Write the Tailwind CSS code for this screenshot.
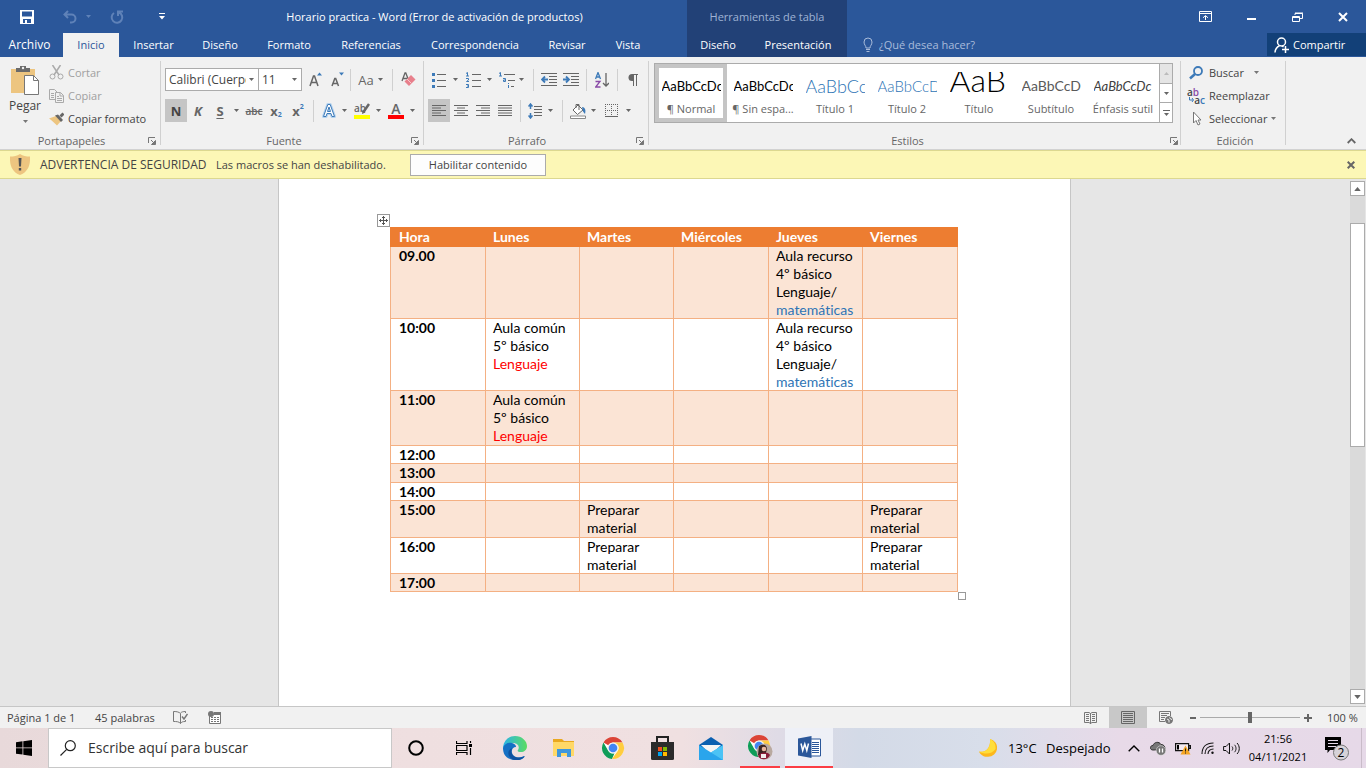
<!DOCTYPE html>
<html lang="es">
<head>
<meta charset="utf-8">
<meta name="viewport" content="width=device-width, initial-scale=1">
<title>Horario practica - Word</title>
<script src="https://cdn.jsdelivr.net/npm/@tailwindcss/browser@4"></script>
</head>
<body class="flex h-screen flex-col overflow-hidden bg-[#e6e6e6] font-['Open_Sans','Noto_Sans',sans-serif] text-[11px] leading-4 text-[#444]">
<svg class="hidden">
  <symbol id="caret" viewBox="0 0 5 3"><path d="M0 0h5L2.500 3z" fill="currentColor"/></symbol>
  <symbol id="launch" viewBox="0 0 8 8"><path d="M.5 6V.5H7M3 3l3 3M7.500 3.500v4h-4z" fill="none" stroke="#777"/><path d="M7.500 3.500v4h-4z" fill="#777"/></symbol>
  <symbol id="chrome" viewBox="0 0 24 24"><circle cx="12" cy="12" r="11" fill="#fff"/><path d="M12 1a11 11 0 0 1 9.530 5.500H12a5.500 5.500 0 0 0-4.760 2.750L2.470 6.500A11 11 0 0 1 12 1z" fill="#db4437"/><path d="M2.470 6.500 7.240 14.750A5.500 5.500 0 0 0 12 17.500l1.500-.2L11 23A11 11 0 0 1 2.470 6.500z" fill="#0f9d58"/><path d="M21.530 6.500A11 11 0 0 1 11 23l5.760-8.250A5.500 5.500 0 0 0 16 8.200L12 6.500z" fill="#ffcd40"/><circle cx="12" cy="12" r="5.500" fill="#f1f1f1"/><circle cx="12" cy="12" r="4.300" fill="#4285f4"/></symbol>
</svg>

<header class="flex h-[57px] shrink-0 bg-[#2b579a] text-white">
  <div class="flex w-[687px] flex-col">
    <div class="flex h-[33px] items-center">
      <div class="flex w-[182px] shrink-0 items-center pl-5">
        <button aria-label="Guardar"><svg class="h-[14px] w-[14px]" viewBox="0 0 14 14"><path fill="#fff" fill-rule="evenodd" d="M0 0h14v14H0zM2 1.500v5h10v-5zM3 9v4h2v-3h2v3h4V9z"/></svg></button>
        <button aria-label="Deshacer" class="ml-[29px]"><svg class="h-[14px] w-[14px]" viewBox="0 0 14 14" fill="none" stroke="#5f82b8" stroke-width="2"><path d="M5 1 1.500 4.500 5 8M1.500 4.500h7a4 4 0 0 1 0 8H7"/></svg></button>
        <button aria-label="Opciones de deshacer" class="ml-[9px] text-[#5f82b8]"><svg class="h-[3px] w-[5px]"><use href="#caret"/></svg></button>
        <button aria-label="Rehacer" class="ml-[19px]"><svg class="h-[14px] w-[14px]" viewBox="0 0 14 14" fill="none" stroke="#5f82b8" stroke-width="2"><path d="M9 2.500A5.300 5.300 0 1 1 4 3M8 6V1.500h5"/></svg></button>
        <button aria-label="Personalizar barra" class="ml-[35px]"><svg class="h-[7px] w-[6px]" viewBox="0 0 6 7"><path d="M0 0h6v1H0zM0 3h6L3 6.500z" fill="#fff"/></svg></button>
      </div>
      <h1 class="flex-1 text-center">Horario practica - Word (Error de activación de productos)</h1>
    </div>
    <nav class="flex h-6 items-center" aria-label="Fichas">
      <button class="w-[59px] text-xs">Archivo</button>
      <button class="ml-1 h-6 w-14 bg-[#f1f1f1] text-[#2b579a]">Inicio</button>
      <button class="w-[69px]">Insertar</button>
      <button class="w-16">Diseño</button>
      <button class="w-[74px]">Formato</button>
      <button class="w-[90px]">Referencias</button>
      <button class="w-[118px]">Correspondencia</button>
      <button class="w-[66px]">Revisar</button>
      <button class="w-14">Vista</button>
    </nav>
  </div>
  <div class="flex w-40 flex-col bg-[#224177]">
    <div class="flex h-[33px] items-center justify-center text-[#9fb3d4]">Herramientas de tabla</div>
    <div class="flex h-6 items-center">
      <button class="w-[62px]">Diseño</button>
      <button class="flex-1">Presentación</button>
    </div>
  </div>
  <div class="flex flex-1 flex-col">
    <div class="flex h-[33px] items-center justify-end">
      <button aria-label="Opciones de la cinta" class="flex w-[46px] justify-center"><svg class="h-[11px] w-[13px]" viewBox="0 0 13 11"><path d="M.5 .5h12v10H.5zM.5 2.500h12M6.500 9V5M4 6.800 6.500 4.500 9 6.800" fill="none" stroke="#fff"/></svg></button>
      <button aria-label="Minimizar" class="flex w-[46px] justify-center"><span class="mt-1 h-[2px] w-[9px] bg-white"></span></button>
      <button aria-label="Restaurar" class="flex w-[46px] justify-center"><svg class="h-[10px] w-[11px]" viewBox="0 0 11 10" fill="none" stroke="#fff"><path d="M.5 4.500h7v5h-7zM3 3V1.500h7.500v5H8M.5 5.500h7M3 1h8"/></svg></button>
      <button aria-label="Cerrar" class="flex w-[46px] justify-center"><svg class="h-[10px] w-[10px]" viewBox="0 0 10 10"><path d="m1 1 8 8M9 1 1 9" stroke="#fff" stroke-width="2"/></svg></button>
    </div>
    <div class="flex h-6 items-center">
      <svg class="ml-4 h-4 w-[10px]" viewBox="0 0 10 16" fill="none" stroke="#a9bcda"><path d="M3 11C3 8.500 1 8 1 5a4 4 0 0 1 8 0c0 3-2 3.500-2 6zM3 12.500h4M3.500 14.500h3"/></svg>
      <button class="ml-[6px] text-[#a9bcda]">¿Qué desea hacer?</button>
      <button class="mb-px ml-auto flex h-[23px] w-[99px] items-center gap-1 bg-[#124078] pl-[7px]">
        <svg class="h-4 w-[15px]" viewBox="0 0 15 16" fill="none" stroke="#fff" stroke-width="1.500"><circle cx="7.500" cy="5" r="4"/><path d="M1 15.500C1.200 12 3 10 5.500 8.800M8 9l1.500 1M8 12.500h7M11.500 9v7"/></svg>Compartir
      </button>
    </div>
  </div>
</header>

<section class="flex h-[93px] shrink-0 border-b border-[#d2d2d2] bg-[#f1f1f1] pt-1 pb-1" aria-label="Cinta">
  <!-- Portapapeles -->
  <div class="flex w-[161px] shrink-0 flex-col border-r border-[#d0d0d0]">
    <div class="flex h-[70px] shrink-0">
      <button class="ml-[5px] flex w-10 flex-col items-center pt-1">
        <svg class="h-[30px] w-[30px]" viewBox="0 0 30 30"><path d="M1 4h24v24H1z" fill="#edc580"/><path d="M6 3h4V1h6v2h4v4H6z" fill="#6b6b6b"/><circle cx="13" cy="3" r="1.200" fill="#f1f1f1"/><path d="M14.500 10.500h9l5 5v14h-14z" fill="#fff" stroke="#777"/><path d="M23.500 10.500v5h5" fill="none" stroke="#777"/></svg>
        <span class="mt-[3px] text-xs">Pegar</span>
        <svg class="mt-[6px] h-[3px] w-[5px] text-[#777]"><use href="#caret"/></svg>
      </button>
      <div class="ml-1 flex flex-col">
        <button class="flex h-[23px] items-center gap-1 text-[#a0a0a0]"><svg class="h-[15px] w-[15px]" viewBox="0 0 15 15" fill="none" stroke="#aaa" stroke-width="1.500"><path d="M3.500 0 10 10M11.500 0 5 10"/><circle cx="3.500" cy="11.500" r="2.500" stroke-width="1"/><circle cx="11.500" cy="11.500" r="2.500" stroke-width="1"/></svg>Cortar</button>
        <button class="flex h-[23px] items-center gap-1 text-[#a0a0a0]"><svg class="h-[15px] w-[15px]" viewBox="0 0 15 15" fill="#f1f1f1" stroke="#aaa"><path d="M.5 1.500h5l3 3v7h-8zM2 5.500h3M2 7.500h3M2 9.500h3"/><path d="M6.500 4.500h5l3 3v7h-8zM11 4.500V8h3.500M8 8.500h2M8 10.500h5M8 12.500h5"/></svg>Copiar</button>
        <button class="flex h-[23px] items-center gap-1"><svg class="h-[14px] w-[15px]" viewBox="0 0 15 14"><path d="m7 4 5 5-4 4.500C5 11 3 8 0 6.500z" fill="#edc580"/><path d="m6 3.500 3-1 5 5.500-2 2z" fill="#666"/><path d="m11.500 4.500 3-3" stroke="#666" stroke-width="3"/></svg>Copiar formato</button>
      </div>
    </div>
    <div class="flex h-5 shrink-0 items-center text-[#666]"><span class="flex-1 pr-[5px] text-center">Portapapeles</span><button aria-label="Más opciones de portapapeles" class="mr-1"><svg class="h-2 w-2"><use href="#launch"/></svg></button></div>
  </div>

  <!-- Fuente -->
  <div class="flex w-[263px] shrink-0 flex-col border-r border-[#d0d0d0]">
    <div class="flex h-[70px] shrink-0 flex-col gap-2 pt-[7px] pl-1 text-[#666]">
      <div class="flex h-[23px] items-center">
        <label class="flex h-[23px] w-[94px] items-center border border-[#ababab] bg-white pr-1 pl-[3px]"><select aria-label="Fuente" class="w-0 flex-1 appearance-none overflow-hidden text-xs text-[#444]"><option>Calibri (Cuerpo)</option></select><svg class="ml-[3px] h-[3px] w-[5px]"><use href="#caret"/></svg></label>
        <label class="flex h-[23px] w-[43px] items-center border border-l-0 border-[#ababab] bg-white pr-1 pl-[3px]"><select aria-label="Tamaño" class="w-0 flex-1 appearance-none text-xs text-[#444]"><option>11</option></select><svg class="h-[3px] w-[5px]"><use href="#caret"/></svg></label>
        <button aria-label="Aumentar tamaño" class="ml-[2px] flex w-[22px] justify-center"><svg class="h-[15px] w-[13px]" viewBox="0 0 13 15"><path d="m1 14 3.500-10h1L9 14M2.500 10.500h5" fill="none" stroke="#666" stroke-width="1.500"/><path d="m8 3.500 2.500-3 2.500 3z" fill="#3d7ab8"/></svg></button>
        <button aria-label="Disminuir tamaño" class="flex w-[22px] justify-center"><svg class="h-[15px] w-[13px]" viewBox="0 0 13 15"><path d="m1 14 2.800-7.500h.9L7.500 14M2 11.500h4.500" fill="none" stroke="#666" stroke-width="1.500"/><path d="M8 .5h5l-2.500 3z" fill="#3d7ab8"/></svg></button>
        <span class="ml-[2px] h-[22px] w-px bg-[#d0d0d0]"></span>
        <button class="ml-[6px] w-[18px] text-[13px]">Aa</button>
        <button aria-label="Cambiar mayúsculas" class="flex w-[10px] justify-center"><svg class="h-[3px] w-[5px]"><use href="#caret"/></svg></button>
        <span class="ml-[7px] h-[22px] w-px bg-[#d0d0d0]"></span>
        <button aria-label="Borrar formato" class="ml-1 flex w-[22px] justify-center"><svg class="h-[15px] w-[15px]" viewBox="0 0 15 15"><path d="m1 9 3-8h.8L7.500 8M2 6.500h4" fill="none" stroke="#666" stroke-width="1.300"/><path d="m10 3 4.500 4.500L8 14l-4.500-4.500z" fill="#e8808c"/><path d="m6 7 4.500 4.500" stroke="#f8c8cc"/></svg></button>
      </div>
      <div class="flex h-[23px] items-center">
        <button class="h-[23px] w-[22px] bg-[#c5c5c5] text-[13px] font-bold text-[#444]">N</button>
        <button class="w-[22px] text-[13px] font-bold italic">K</button>
        <button class="w-[22px] text-[13px] font-bold underline underline-offset-2">S</button>
        <button aria-label="Tipos de subrayado" class="flex w-[10px] justify-center"><svg class="h-[3px] w-[5px]"><use href="#caret"/></svg></button>
        <button class="ml-[2px] w-[22px] text-[10px] font-semibold line-through">abc</button>
        <button class="flex w-[22px] items-end justify-center text-[13px] font-bold">x<span class="text-[7px] leading-[8px] text-[#3d7ab8]">2</span></button>
        <button class="flex w-[22px] items-start justify-center text-[13px] font-bold">x<span class="text-[7px] leading-[8px] text-[#3d7ab8]">2</span></button>
        <span class="ml-1 h-[22px] w-px bg-[#d0d0d0]"></span>
        <button aria-label="Efectos de texto" class="ml-[5px] flex w-5 justify-center"><svg class="h-[15px] w-[14px]" viewBox="0 0 14 15"><path d="m1.500 13.500 4.300-12h2.400l4.300 12H10l-1-3H5l-1 3zM5.500 8.500h3L7 4z" fill="#fff" stroke="#b5d3ef" stroke-width="3" stroke-linejoin="round"/><path d="m1.500 13.500 4.300-12h2.400l4.300 12H10l-1-3H5l-1 3zM5.500 8.500h3L7 4z" fill="#fff" stroke="#3d7ab8"/></svg></button>
        <button aria-label="Más efectos" class="flex w-[10px] justify-center"><svg class="h-[3px] w-[5px]"><use href="#caret"/></svg></button>
        <button aria-label="Resaltado" class="ml-[3px] flex w-5 flex-col items-center text-[10px] leading-[10px] font-semibold"><span class="flex h-3 w-4">ab<svg class="-ml-1 h-3 w-2 shrink-0" viewBox="0 0 8 12"><path d="M7 1 1.500 9" stroke="#666" stroke-width="2.500"/><path d="m0 11 .5-4 3 2.500z" fill="#666"/></svg></span><span class="h-1 w-4 bg-[#ff0]"></span></button>
        <button aria-label="Colores de resaltado" class="ml-px flex w-[10px] justify-center"><svg class="h-[3px] w-[5px]"><use href="#caret"/></svg></button>
        <button class="ml-[3px] flex w-5 flex-col items-center text-[14px] leading-3 font-semibold">A<span class="h-1 w-4 bg-[#f00]"></span></button>
        <button aria-label="Colores de fuente" class="ml-px flex w-[10px] justify-center"><svg class="h-[3px] w-[5px]"><use href="#caret"/></svg></button>
      </div>
    </div>
    <div class="flex h-5 shrink-0 items-center text-[#666]"><span class="flex-1 pr-1 text-center">Fuente</span><button aria-label="Más opciones de fuente" class="mr-1"><svg class="h-2 w-2"><use href="#launch"/></svg></button></div>
  </div>

  <!-- Párrafo -->
  <div class="flex w-[225px] shrink-0 flex-col border-r border-[#d0d0d0]">
    <div class="flex h-[70px] shrink-0 flex-col gap-2 pt-[7px] pl-1 text-[#666]">
      <div class="flex h-[23px] items-center">
        <button aria-label="Viñetas" class="flex w-[22px] justify-center"><svg class="h-4 w-[14px]" viewBox="0 0 14 16"><path d="M0 1h3v3H0zM0 7h3v3H0zM0 13h3v3H0z" fill="#3d7ab8"/><path d="M5 2.500h9M5 8.500h9M5 14.500h9" stroke="#666"/></svg></button>
        <button aria-label="Tipos de viñeta" class="flex w-[10px] justify-center"><svg class="h-[3px] w-[5px]"><use href="#caret"/></svg></button>
        <button aria-label="Numeración" class="ml-[2px] flex w-[22px] justify-center"><svg class="h-4 w-[15px]" viewBox="0 0 15 16"><path d="M0 1.500 1.500.5V4M0 4h3M0 6.500h2.500V8L.5 9.500H3M0 12.500h2.500v3H0M1 14h1.500" fill="none" stroke="#3d7ab8"/><path d="M6 2.500h9M6 8.500h9M6 14.500h9" stroke="#666"/></svg></button>
        <button aria-label="Tipos de numeración" class="flex w-[10px] justify-center"><svg class="h-[3px] w-[5px]"><use href="#caret"/></svg></button>
        <button aria-label="Lista multinivel" class="ml-1 flex w-[18px] justify-center"><svg class="h-4 w-4" viewBox="0 0 16 16"><path d="M0 1.500 1.500.5V4M0 4h3M4 6.500h2.500v3H4.500V8h2M9.500 11v1M9.500 13v3" fill="none" stroke="#3d7ab8"/><path d="M5 2.500h11M9 8.500h7M12 14.500h3" stroke="#666"/></svg></button>
        <button aria-label="Tipos de lista" class="flex w-[10px] justify-center"><svg class="h-[3px] w-[5px]"><use href="#caret"/></svg></button>
        <span class="ml-[7px] h-[22px] w-px bg-[#d0d0d0]"></span>
        <button aria-label="Disminuir sangría" class="ml-1 flex w-[22px] justify-center"><svg class="h-[13px] w-4" viewBox="0 0 16 13"><path d="M0 .5h16M8 3.500h8M8 6.500h8M8 9.500h8M0 12.500h16" stroke="#666"/><path d="M7 6.500H1M4 3.500l-3 3 3 3" stroke="#3d7ab8" stroke-width="1.800" fill="none"/></svg></button>
        <button aria-label="Aumentar sangría" class="flex w-[22px] justify-center"><svg class="h-[13px] w-4" viewBox="0 0 16 13"><path d="M0 .5h16M8 3.500h8M8 6.500h8M8 9.500h8M0 12.500h16" stroke="#666"/><path d="M0 6.500h6M3 3.500l3 3-3 3" stroke="#3d7ab8" stroke-width="1.800" fill="none"/></svg></button>
        <span class="ml-1 h-[22px] w-px bg-[#d0d0d0]"></span>
        <button aria-label="Ordenar" class="ml-1 flex w-[22px] justify-center"><svg class="h-4 w-[14px]" viewBox="0 0 14 16" fill="none"><path d="M.5 7 3 .5 5.500 7M1.500 5h3" stroke="#3d7ab8" stroke-width="1.300"/><path d="M.5 9.500h4.500L.7 15H5.500" stroke="#8a4ba8" stroke-width="1.300"/><path d="M11 1v13M8 11l3 3 3-3" stroke="#666" stroke-width="1.300"/></svg></button>
        <span class="ml-1 h-[22px] w-px bg-[#d0d0d0]"></span>
        <button aria-label="Mostrar todo" class="ml-1 flex w-[22px] justify-center"><svg class="h-3 w-[10px]" viewBox="0 0 10 12"><path d="M4 .5h6M5.500 0v12M8.500 0v12" stroke="#666"/><path d="M5.500 0v7H4a3.500 3.500 0 0 1 0-7z" fill="#666"/></svg></button>
      </div>
      <div class="flex h-[23px] items-center">
        <button aria-label="Alinear a la izquierda" class="flex h-[23px] w-[22px] items-center justify-center bg-[#c5c5c5]"><svg class="h-[11px] w-[14px]" viewBox="0 0 14 11"><path d="M0 .5h14M0 3h9M0 5.500h14M0 8h9M0 10.500h14" stroke="#666"/></svg></button>
        <button aria-label="Centrar" class="flex w-[22px] justify-center"><svg class="h-[11px] w-[14px]" viewBox="0 0 14 11"><path d="M0 .5h14M3 3h8M0 5.500h14M3 8h8M0 10.500h14" stroke="#666"/></svg></button>
        <button aria-label="Alinear a la derecha" class="flex w-[22px] justify-center"><svg class="h-[11px] w-[14px]" viewBox="0 0 14 11"><path d="M0 .5h14M5 3h9M0 5.500h14M5 8h9M0 10.500h14" stroke="#666"/></svg></button>
        <button aria-label="Justificar" class="flex w-[22px] justify-center"><svg class="h-[11px] w-[14px]" viewBox="0 0 14 11"><path d="M0 .5h14M0 3h14M0 5.500h14M0 8h14M0 10.500h14" stroke="#666"/></svg></button>
        <span class="ml-1 h-[22px] w-px bg-[#d0d0d0]"></span>
        <button aria-label="Espaciado" class="ml-1 flex w-5 justify-center"><svg class="h-4 w-[14px]" viewBox="0 0 14 16" fill="none"><path d="M6 3.500h8M6 6.500h8M6 9.500h8M6 12.500h8" stroke="#666"/><path d="M2.500 1v5M.5 3.500l2-2.500 2 2.500M2.500 10v5M.5 12.500l2 2.500 2-2.500" stroke="#3d7ab8" stroke-width="1.500"/></svg></button>
        <button aria-label="Opciones de espaciado" class="flex w-[10px] justify-center"><svg class="h-[3px] w-[5px]"><use href="#caret"/></svg></button>
        <span class="ml-[7px] h-[22px] w-px bg-[#d0d0d0]"></span>
        <button aria-label="Sombreado" class="ml-[5px] flex w-5 justify-center"><svg class="h-4 w-[17px]" viewBox="0 0 17 16"><path d="m8 2 5 5-5.500 4.500L3 7z" fill="#fff" stroke="#666"/><path d="M6 5V1.500h3V7" fill="none" stroke="#666"/><path d="M12 4c3 0 4 3 3 7l-2-2.500z" fill="#3d7ab8"/><path d="M.5 13h15v2.500H.5z" fill="#fff" stroke="#888"/></svg></button>
        <button aria-label="Colores de sombreado" class="flex w-[10px] justify-center"><svg class="h-[3px] w-[5px]"><use href="#caret"/></svg></button>
        <button aria-label="Bordes" class="ml-[3px] flex w-5 justify-center"><svg class="h-[13px] w-[13px]" viewBox="0 0 13 13" stroke="#666"><path d="M0 .5h13M0 6.500h13M.5 0v12M6.500 0v12M12.500 0v12" stroke-dasharray="1 1"/><path d="M0 12.500h13"/></svg></button>
        <button aria-label="Tipos de borde" class="ml-[2px] flex w-[10px] justify-center"><svg class="h-[3px] w-[5px]"><use href="#caret"/></svg></button>
      </div>
    </div>
    <div class="flex h-5 shrink-0 items-center text-[#666]"><span class="flex-1 pr-[6px] text-center">Párrafo</span><button aria-label="Más opciones de párrafo" class="mr-1"><svg class="h-2 w-2"><use href="#launch"/></svg></button></div>
  </div>

  <!-- Estilos -->
  <div class="flex w-[532px] shrink-0 flex-col border-r border-[#d0d0d0]">
    <div class="flex h-[70px] shrink-0 pt-[2px] pl-[5px]">
      <div class="flex h-[60px] w-[519px] border border-[#ababab] bg-white font-['Lato',sans-serif]">
        <button class="flex w-[72px] flex-col items-center border-4 border-[#c5c5c5] pt-1"><span class="flex h-7 w-[59px] items-center overflow-hidden text-[13px] text-black">AaBbCcDc</span><span class="mt-px font-['Open_Sans'] text-[11px] whitespace-nowrap text-[#666]">¶ Normal</span></button>
        <button class="flex w-[72px] flex-col items-center pt-2"><span class="flex h-7 w-[59px] items-center overflow-hidden text-[13px] text-black">AaBbCcDc</span><span class="mt-px font-['Open_Sans'] text-[11px] whitespace-nowrap text-[#666]">¶ Sin espa...</span></button>
        <button class="flex w-[72px] flex-col items-center pt-2"><span class="flex h-7 w-[59px] items-center overflow-hidden text-[18px] font-light text-[#2e74b5]">AaBbCc</span><span class="mt-px font-['Open_Sans'] text-[11px] text-[#666]">Título 1</span></button>
        <button class="flex w-[72px] flex-col items-center pt-2"><span class="flex h-7 w-[59px] items-center overflow-hidden text-[15px] font-light text-[#2e74b5]">AaBbCcD</span><span class="mt-px font-['Open_Sans'] text-[11px] text-[#666]">Título 2</span></button>
        <button class="flex w-[72px] flex-col items-center pt-2"><span class="flex h-7 w-[59px] items-center overflow-hidden pb-3 text-[32px] font-light text-black">AaB</span><span class="mt-px font-['Open_Sans'] text-[11px] text-[#666]">Título</span></button>
        <button class="flex w-[72px] flex-col items-center pt-2"><span class="flex h-7 w-[59px] items-center overflow-hidden text-[14px] text-[#5a5a5a]">AaBbCcD</span><span class="mt-px font-['Open_Sans'] text-[11px] text-[#666]">Subtítulo</span></button>
        <button class="flex w-[72px] flex-col items-center pt-2"><span class="flex h-7 w-[59px] items-center overflow-hidden text-[13px] text-[#404040] italic">AaBbCcDc</span><span class="mt-px font-['Open_Sans'] text-[11px] whitespace-nowrap text-[#666]">Énfasis sutil</span></button>
        <div class="flex flex-1 flex-col divide-y divide-[#ababab] border-l border-[#ababab] text-[#666]">
          <button aria-label="Estilos anteriores" class="flex flex-1 items-center justify-center bg-[#e5e5e5] text-[#bbb]"><svg class="h-[3px] w-[5px] rotate-180"><use href="#caret"/></svg></button>
          <button aria-label="Estilos siguientes" class="flex flex-1 items-center justify-center"><svg class="h-[3px] w-[5px]"><use href="#caret"/></svg></button>
          <button aria-label="Más estilos" class="flex flex-1 flex-col items-center justify-center gap-[2px]"><span class="h-px w-[7px] bg-[#666]"></span><svg class="h-[3px] w-[5px]"><use href="#caret"/></svg></button>
        </div>
      </div>
    </div>
    <div class="flex h-5 shrink-0 items-center text-[#666]"><span class="flex-1 pr-1 text-center">Estilos</span><button aria-label="Más opciones de estilos" class="mr-[2px]"><svg class="h-2 w-2"><use href="#launch"/></svg></button></div>
  </div>

  <!-- Edición -->
  <div class="flex w-[105px] shrink-0 flex-col border-r border-[#d0d0d0]">
    <div class="flex h-[70px] shrink-0 flex-col pl-[6px]">
      <button class="flex h-[23px] items-center gap-1"><svg class="h-[14px] w-[18px]" viewBox="0 0 18 14" fill="none" stroke="#3d7ab8"><circle cx="11" cy="5" r="4" stroke-width="1.800"/><path d="m8 8-5 4.500" stroke-width="2.500"/></svg>Buscar<svg class="ml-[6px] h-[3px] w-[5px] text-[#777]"><use href="#caret"/></svg></button>
      <button class="flex h-[23px] items-center gap-1"><span class="flex h-4 w-[18px] flex-col text-[10px] leading-[8px] font-semibold"><span class="text-left">a<span class="text-[#8a4ba8]">b</span></span><span class="flex justify-end"><svg class="mt-[1px] h-[5px] w-[5px]" viewBox="0 0 5 5"><path d="M.5 0v3H4M3 1l1.500 2L3 5" fill="none" stroke="#3d7ab8"/></svg>a<span class="text-[#3d7ab8]">c</span></span></span>Reemplazar</button>
      <button class="flex h-[23px] items-center gap-1"><svg class="h-[15px] w-[18px]" viewBox="0 0 18 15"><path d="M6.500 1v11l2.500-2.500 2 4.500 2-1-2-4h3z" fill="#fff" stroke="#777"/></svg>Seleccionar<svg class="h-[3px] w-[5px] text-[#777]"><use href="#caret"/></svg></button>
    </div>
    <div class="flex h-5 shrink-0 items-center justify-center pl-1 text-[#666]">Edición</div>
  </div>
  <button aria-label="Contraer la cinta" class="mr-[10px] mb-px ml-auto self-end"><svg class="h-[6px] w-[9px]" viewBox="0 0 9 6"><path d="m.7 5 3.800-3.800L8.300 5" fill="none" stroke="#666" stroke-width="1.800"/></svg></button>
</section>

<div class="flex h-[29px] shrink-0 items-center border-y border-[#dcd890] bg-[#fcf7b6]" role="alert">
  <svg class="ml-[10px] h-[21px] w-5" viewBox="0 0 20 21"><path d="M10 0c3 2 6 2.500 10 2.500C20.500 11 18 18 10 21 2 18-.5 11 0 2.500 4 2.500 7 2 10 0z" fill="#edc580"/><path d="M8.500 4h3l-.5 8.500H9zM8.800 14h2.400v2.500H8.800z" fill="#555"/></svg>
  <strong class="ml-[10px] w-44 text-xs font-normal whitespace-nowrap">ADVERTENCIA DE SEGURIDAD</strong>
  <span class="w-[194px]">Las macros se han deshabilitado.</span>
  <button class="h-[22px] w-[136px] border border-[#ababab] bg-[#fdfdfd]">Habilitar contenido</button>
  <button aria-label="Cerrar aviso" class="mr-[11px] ml-auto"><svg class="h-2 w-2" viewBox="0 0 8 8"><path d="m.7.7 6.600 6.600M7.300.7.7 7.300" stroke="#666" stroke-width="2"/></svg></button>
</div>

<main class="flex min-h-0 flex-1">
  <div class="flex flex-1 justify-center overflow-hidden">
    <article class="w-[793px] border-x border-[#c6c6c6] bg-white pl-[111px] font-['Lato',sans-serif] text-[14px] leading-[18px] text-black [font-variant-ligatures:none]">
      <div class="relative mt-12 w-[568px]">
        <button aria-label="Mover tabla" class="absolute -top-[13px] -left-[13px] flex h-[13px] w-[13px] items-center justify-center border border-[#999] bg-white"><svg class="h-[9px] w-[9px]" viewBox="0 0 9 9"><path d="M4.500 0v9M0 4.500h9M3 1.500h3M3 7.500h3M1.500 3v3M7.500 3v3" stroke="#555"/></svg></button>
        <table class="w-full table-fixed border-separate border-spacing-0 shadow-[inset_1px_0_0_#f4b083] [&_td]:px-[7px] [&_td]:py-0 [&_td]:align-top [&_td]:shadow-[inset_-1px_-1px_0_#f4b083] [&_th]:px-[7px] [&_th]:py-0 [&_th]:text-left [&_th]:align-top [&_tbody_th]:pl-[9px] [&_tbody_th]:shadow-[inset_-1px_-1px_0_#f4b083,inset_1px_0_0_#f4b083] [&_thead_th]:pt-px">
          <colgroup><col class="w-24"><col class="w-[94px]"><col class="w-[94px]"><col class="w-[95px]"><col class="w-[94px]"><col class="w-[95px]"></colgroup>
          <thead><tr class="h-5 bg-[#ed7d31] text-white"><th class="pl-[9px]!">Hora</th><th>Lunes</th><th>Martes</th><th>Miércoles</th><th>Jueves</th><th>Viernes</th></tr></thead>
          <tbody>
            <tr class="h-[72px] bg-[#fbe4d5]"><th>09.00</th><td></td><td></td><td></td><td>Aula recurso<br>4º básico<br>Lenguaje/<br><span class="text-[#2e74b5]">matemáticas</span></td><td></td></tr>
            <tr class="h-[72px]"><th>10:00</th><td>Aula común<br>5º básico<br><span class="text-[#f00]">Lenguaje</span></td><td></td><td></td><td>Aula recurso<br>4º básico<br>Lenguaje/<br><span class="text-[#2e74b5]">matemáticas</span></td><td></td></tr>
            <tr class="h-[55px] bg-[#fbe4d5]"><th>11:00</th><td>Aula común<br>5º básico<br><span class="text-[#f00]">Lenguaje</span></td><td></td><td></td><td></td><td></td></tr>
            <tr class="h-[18px]"><th>12:00</th><td></td><td></td><td></td><td></td><td></td></tr>
            <tr class="h-[19px] bg-[#fbe4d5]"><th>13:00</th><td></td><td></td><td></td><td></td><td></td></tr>
            <tr class="h-[18px]"><th>14:00</th><td></td><td></td><td></td><td></td><td></td></tr>
            <tr class="h-[37px] bg-[#fbe4d5]"><th>15:00</th><td></td><td>Preparar<br>material</td><td></td><td></td><td>Preparar<br>material</td></tr>
            <tr class="h-9"><th>16:00</th><td></td><td>Preparar<br>material</td><td></td><td></td><td>Preparar<br>material</td></tr>
            <tr class="h-[18px] bg-[#fbe4d5]"><th>17:00</th><td></td><td></td><td></td><td></td><td></td></tr>
          </tbody>
        </table>
        <span class="absolute -right-2 -bottom-2 h-2 w-2 border border-[#999] bg-white"></span>
      </div>
    </article>
  </div>
  <div class="flex w-[17px] flex-col items-center bg-[#e6e6e6] pt-[2px] pb-[2px]">
    <button aria-label="Desplazar arriba" class="flex h-[15px] w-[15px] items-center justify-center border border-[#ababab] bg-white text-[#666]"><svg class="h-1 w-[7px] rotate-180" viewBox="0 0 5 3"><use href="#caret"/></svg></button>
    <div class="w-[15px] flex-1 bg-[#dadada] pt-[27px]"><div class="h-56 border border-[#ababab] bg-white"></div></div>
    <button aria-label="Desplazar abajo" class="flex h-[15px] w-[15px] items-center justify-center border border-[#ababab] bg-white text-[#666]"><svg class="h-1 w-[7px]" viewBox="0 0 5 3"><use href="#caret"/></svg></button>
  </div>
</main>

<footer class="flex h-[22px] shrink-0 items-center border-t border-[#c6c6c6] bg-[#f1f1f1]">
  <span class="ml-[7px] w-[88px]">Página 1 de 1</span>
  <span class="w-[78px]">45 palabras</span>
  <button aria-label="Revisión ortográfica"><svg class="h-[13px] w-[15px]" viewBox="0 0 15 13" fill="none" stroke="#777"><path d="M7.500 2.500C6 1 4 .5.500.5v10c3 0 5.500 0 7 2 1-1.500 2-2 5-2V9M7.500 2.500v10M7.500 2C8.500 1 10 .5 12.500.5V2"/><path d="m9 5.500 2 2.500 3.500-5" stroke-width="1.500"/></svg></button>
  <button aria-label="Macros" class="ml-5"><svg class="h-[13px] w-[13px]" viewBox="0 0 13 13"><path d="M1.500 5v7.500h11v-11H6" fill="#fff" stroke="#777"/><path d="M6 1h7v3H6z" fill="#777"/><circle cx="3" cy="3" r="3" fill="#777"/><path d="M3 6.500h8M3 8.500h8M3 10.500h8" stroke="#777" stroke-dasharray="2 1"/></svg></button>
  <div class="ml-auto flex h-full items-center">
    <button aria-label="Modo de lectura" class="flex w-[38px] justify-center"><svg class="h-3 w-[13px]" viewBox="0 0 13 12" fill="none" stroke="#777"><path d="M.5 .5h4.500l1.500 1 1.500-1h4.500v10H8l-1.500 1-1.500-1H.5zM6.500 1v11M2 2.500h3M2 4.500h3M2 6.500h3M2 8.500h3M8 2.500h3M8 4.500h3M8 6.500h3M8 8.500h3"/></svg></button>
    <button aria-label="Diseño de impresión" class="flex h-[21px] w-[38px] items-center justify-center bg-[#c8c8c8]"><svg class="h-[13px] w-[14px]" viewBox="0 0 14 13" fill="none" stroke="#666"><path d="M.5 .5h13v12H.5zM2 2.500h10M2 4.500h10M2 6.500h10M2 8.500h10M2 10.500h10"/></svg></button>
    <button aria-label="Diseño web" class="flex w-[38px] justify-center"><svg class="h-[13px] w-[14px]" viewBox="0 0 14 13" fill="none" stroke="#777"><path d="M6 10.500H.5V.5h11V5M2 2.500h8M2 4.500h6M2 6.500h4M2 8.500h3"/><circle cx="10" cy="9" r="3.500" fill="#777"/><path d="m8 8 2 1v2.500M10.500 6.500l1 1.500 1.500.5" stroke="#f1f1f1"/></svg></button>
    <button aria-label="Alejar" class="ml-[5px] h-[2px] w-[6px] bg-[#666]"></button>
    <input type="range" aria-label="Zoom" min="0" max="100" value="50" class="mx-1 h-3 w-[100px] appearance-none bg-[linear-gradient(#aaa,#aaa)] bg-[length:100%_1px] bg-center bg-no-repeat [&::-webkit-slider-thumb]:h-[11px] [&::-webkit-slider-thumb]:w-1 [&::-webkit-slider-thumb]:appearance-none [&::-webkit-slider-thumb]:bg-[#666]">
    <button aria-label="Acercar"><svg class="h-2 w-2" viewBox="0 0 8 8"><path d="M4 0v8M0 4h8" stroke="#666" stroke-width="2"/></svg></button>
    <span class="ml-[15px] w-[39px]">100 %</span>
  </div>
</footer>

<div class="flex h-10 shrink-0 items-center bg-[linear-gradient(90deg,#e8d9da_0%,#efdfe0_30%,#f0e0e1_50%,#dfdbe6_57%,#d3dae7_63%,#d8deea_72%,#e8dae8_82%,#e6d9e8_100%)] text-black">
  <button aria-label="Inicio" class="flex w-12 justify-center"><svg class="h-4 w-4" viewBox="0 0 16 16"><path d="m0 2.200 6.500-.9v6.200H0zM7.300 1.200 16 0v7.500H7.300zM0 8.300h6.500v6.300L0 13.700zM7.300 8.300H16V16l-8.700-1.200z"/></svg></button>
  <label class="flex h-10 w-[344px] items-center border border-[#c8c8c8] bg-white pl-[11px]"><svg class="h-4 w-4" viewBox="0 0 16 16" fill="none" stroke="#222" stroke-width="1.200"><circle cx="10.300" cy="5.700" r="5"/><path d="M6.700 9.300.5 15.500"/></svg><input aria-label="Buscar" class="ml-3 w-0 flex-1 text-[14px] leading-5 outline-none placeholder:text-[#333]" placeholder="Escribe aquí para buscar"></label>
  <button aria-label="Cortana" class="flex w-12 justify-center"><svg class="h-4 w-4" viewBox="0 0 16 16"><circle cx="8" cy="8" r="6.800" fill="none" stroke="#000" stroke-width="2"/></svg></button>
  <button aria-label="Vista de tareas" class="flex w-12 justify-center"><svg class="h-4 w-4" viewBox="0 0 16 16" fill="none" stroke="#000" stroke-width="1.200"><path d="M.5 1v2.500h10.500V1M.5 15v-2.500h10.500V15M.5 5.500h10.500v5H.5zM14.500 1v2M14.500 8v7"/><path d="M13 4h3v3h-3z" fill="#000" stroke="none"/></svg></button>
  <div class="ml-[3px] flex h-10 gap-px">
    <button aria-label="Edge" class="flex w-12 items-center justify-center"><svg class="h-6 w-6" viewBox="0 0 24 24"><defs><linearGradient id="eg" x1="0" x2="1"><stop offset="0" stop-color="#2bb3e8"/><stop offset="1" stop-color="#5bdc62"/></linearGradient></defs><path d="M0 11C1 4 6 0 12 0c7 0 12 5 12 10 0 4-3 6-6 6-3 0-4-1-3-2 2-3 0-7-5-7-5 0-9 3-10 6z" fill="url(#eg)"/><path d="M0 12c1-4 5-6 9-5 3 .5 4 2.500 4 4-3 0-5 3-4 6 1 4 6 6 11 3.500 1-.5 2 0 1 1C18 25 11 25 7 23 2 21 0 17 0 12z" fill="#1570c4"/><path d="M9 12c-2 5 1 10 8 9.500 2 0 3-1 5-1.500-3 4-8 5-12 3.500C4 21 4 14 9 12z" fill="#0f52a0"/></svg></button>
    <button aria-label="Explorador" class="flex w-12 items-center justify-center"><svg class="h-[18px] w-[22px]" viewBox="0 0 22 18"><path d="M0 0h9l2 2h10v15H0z" fill="#e9a820"/><path d="M0 3h21v14H0z" fill="#ffd867"/><path d="M4 10h14v8h-4v-4H8v4H4z" fill="#3f97dc"/></svg></button>
    <button aria-label="Chrome" class="flex w-12 items-center justify-center"><svg class="h-6 w-6"><use href="#chrome"/></svg></button>
    <button aria-label="Tienda" class="flex w-12 items-center justify-center"><svg class="h-6 w-[23px]" viewBox="0 0 23 24"><path d="M6 7V1h11v6" fill="none" stroke="#222" stroke-width="2"/><path d="M0 6h23v16.500a1.500 1.500 0 0 1-1.500 1.500h-20A1.500 1.500 0 0 1 0 22.500z" fill="#2b2b2b"/><path d="M7 11h4v4H7z" fill="#f25022"/><path d="M12 11h4v4h-4z" fill="#7fba00"/><path d="M7 16h4v4H7z" fill="#00a4ef"/><path d="M12 16h4v4h-4z" fill="#ffb900"/></svg></button>
    <button aria-label="Correo" class="flex w-12 items-center justify-center"><svg class="h-[23px] w-6" viewBox="0 0 24 23"><path d="M12 0 24 8v4H0V8z" fill="#0a5fb0"/><path d="M2 8h20l-8 8h-4z" fill="#f4f4f4"/><path d="m0 8 12 7.500L24 8v15H0z" fill="#2aa5ec"/><path d="m12 15.500 12-7.500v15z" fill="#4cc3f5"/></svg></button>
    <button aria-label="Chrome, perfil" class="flex w-12 flex-col items-center"><span class="flex h-[38px] items-center"><svg class="h-[26px] w-[26px]" viewBox="0 0 26 26"><use href="#chrome" width="24" height="24"/><circle cx="17.500" cy="17.500" r="8" fill="#b9a9a0"/><path d="M12 12c5-3 8 0 8 3l-2 7-7-1z" fill="#3a2523"/><circle cx="17" cy="15" r="2.300" fill="#e9b79e"/><path d="M11 22c2-4 10-5 12-1-2 5-9 6-12 1z" fill="#8a1f3a"/><path d="M14 20h5v4h-5z" fill="#f3eeee"/></svg></span><span class="h-[2px] w-10 bg-[#fb3d44]"></span></button>
    <button aria-label="Word" class="flex w-12 flex-col items-center bg-[#eef0f7]"><span class="flex h-[38px] items-center"><svg class="h-[22px] w-[23px]" viewBox="0 0 23 22"><path d="M12 3h10.500v17H12z" fill="#fff" stroke="#2b579a"/><path d="M14 6.500h7M14 8.500h7M14 10.500h7M14 12.500h7M14 14.500h7M14 16.500h7" stroke="#2b579a"/><path d="m0 2.500 13.500-2.500v22L0 19.500z" fill="#2b579a"/><path d="m3 7.500 1.700 7L6.800 8l2 6.500 1.700-7" fill="none" stroke="#fff" stroke-width="1.500"/></svg></span><span class="h-[2px] w-12 bg-[#fb3d44]"></span></button>
  </div>
  <div class="ml-auto flex h-10 items-center">
    <button class="flex items-center text-[13px]"><svg class="h-[18px] w-[18px]" viewBox="0 0 18 18"><path d="M11 0a9 9 0 0 1-2 17.800C5 18.300 1.500 16 0 12.500 5 14 12 10 11 0z" fill="#fdb81c"/><path d="M11 0c4 2 6 5 5.500 10C13 15 6 16 0 12.500 6 14 12 10 11 0z" fill="#ffde3a"/></svg><span class="ml-[11px] w-[38px] text-left">13°C</span><span class="w-[70px] text-left">Despejado</span></button>
    <button aria-label="Iconos ocultos" class="ml-3 flex w-[12px]"><svg class="h-[7px] w-3" viewBox="0 0 12 7"><path d="M.7 6.300 6 1l5.300 5.300" fill="none" stroke="#000" stroke-width="1.400"/></svg></button>
    <button aria-label="OneDrive" class="ml-[10px]"><svg class="h-[15px] w-4" viewBox="0 0 16 15"><path d="M3 9C-.5 9-.5 4.500 3 4.500 4 1 9 0 11 3.500c3 0 4 2 4 5z" fill="#777" stroke="#333"/><circle cx="11" cy="9.500" r="4.800" fill="#777" stroke="#eee" stroke-width=".5"/><path d="M9.500 7.500v4M12.500 7.500v4" stroke="#fff" stroke-width="1.300"/></svg></button>
    <button aria-label="Batería" class="ml-[9px]"><svg class="h-[14px] w-4" viewBox="0 0 16 14"><path d="M.6 2.600h13v7H.6zM14 4.500h1.500v3H14z" fill="#f3e9f0" stroke="#111" stroke-width="1.200"/><path d="M2 4h2v4.500H2z"/><path d="m10.500 4.500 5 9h-10z" fill="#f5a623"/><path d="M10.500 7.500v3M10.500 11.500v1" stroke="#222"/></svg></button>
    <button aria-label="Red" class="ml-[10px]"><svg class="h-3 w-[13px]" viewBox="0 0 13 12" fill="none" stroke="#111"><path d="M1 12C1 5 5 1 12.500 1M4 12c0-5 3-8 8.500-8M7 12c0-3 2-5 5.500-5" stroke-width="1.100"/><circle cx="11.500" cy="10.800" r="1.200" fill="#111" stroke="none"/></svg></button>
    <button aria-label="Volumen" class="ml-[9px]"><svg class="h-[13px] w-[17px]" viewBox="0 0 17 13" fill="none" stroke="#111"><path d="M.6 4.500H3L6.500 1v11L3 8.500H.6zM9 4.500c1 1 1 3 0 4M11.500 2.800c2 2 2 5.400 0 7.400M14 1c3 3 3 8 0 11"/></svg></button>
    <button class="ml-[5px] flex w-[66px] flex-col items-center leading-[18px]"><span>21:56</span><span>04/11/2021</span></button>
    <button aria-label="Notificaciones" class="ml-[14px] flex w-[36px]"><svg class="h-[26px] w-[25px]" viewBox="0 0 25 26"><path d="M0 2h16v13H5l-2.500 3V15H0z"/><path d="M3 5.500h10M3 8.500h10M3 11.500h8" stroke="#e6d9e8"/><circle cx="16" cy="17.500" r="7.500" fill="#d6d2d8" stroke="#777"/><text x="16" y="22" text-anchor="middle" font-family="Open Sans" font-size="12">2</text></svg></button>
    <span class="mr-1 h-10 w-px bg-[#c9bcc9]"></span>
  </div>
</div>
</body>
</html>
